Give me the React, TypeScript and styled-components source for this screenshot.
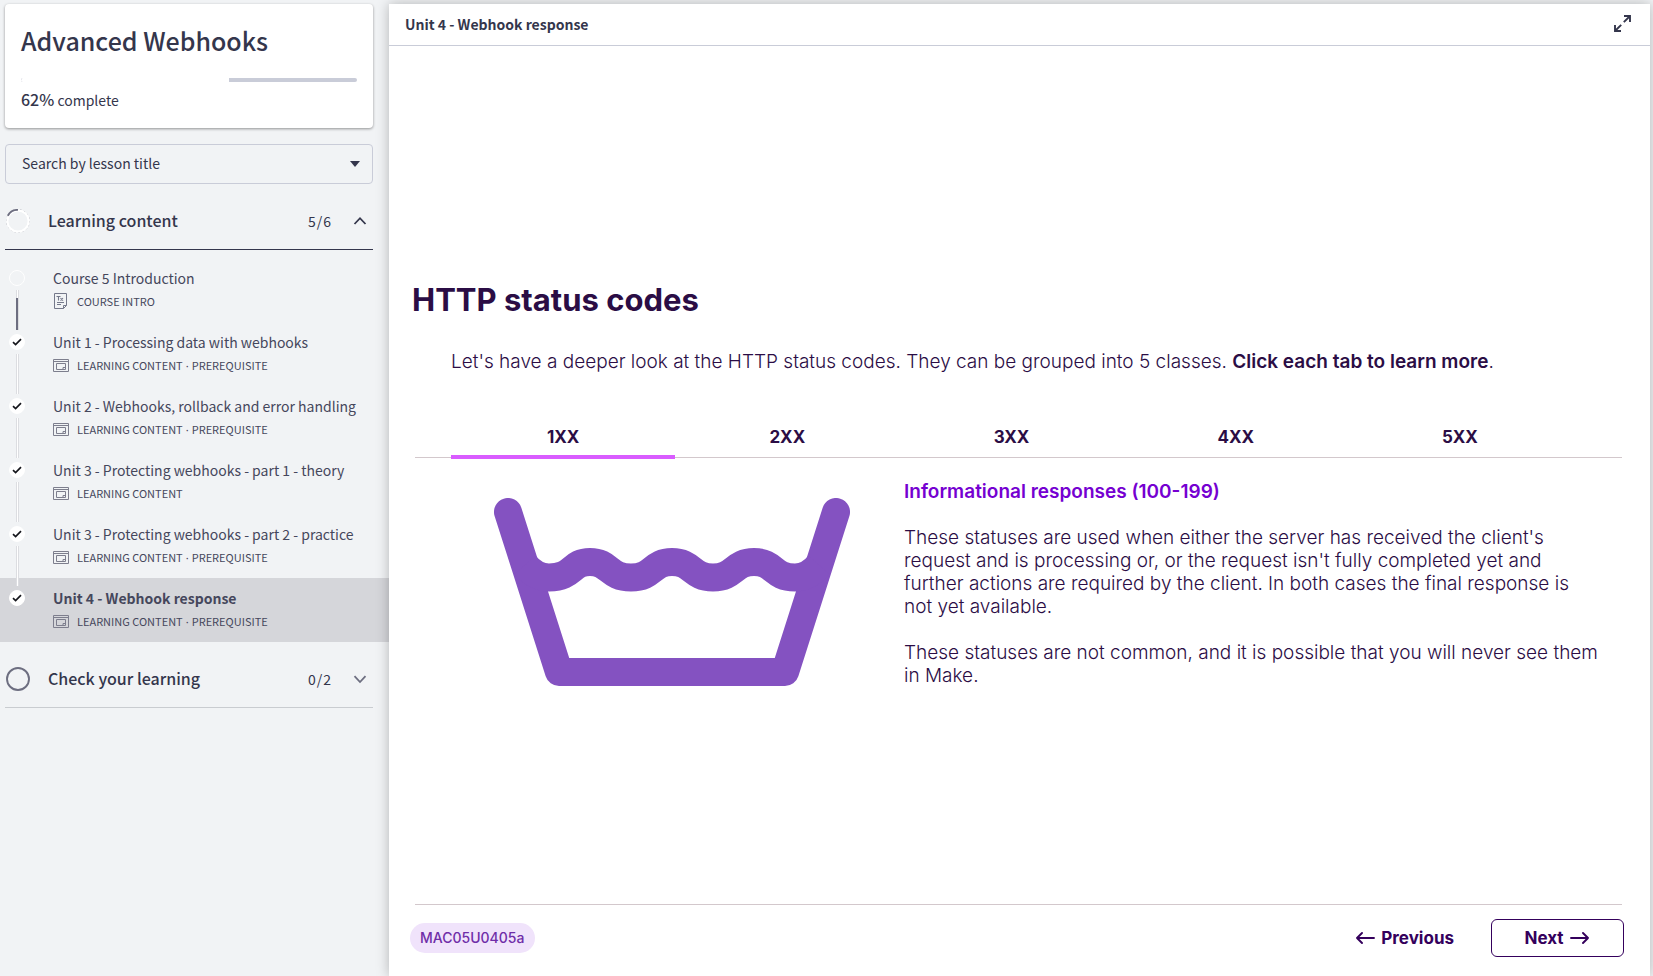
import React, { Fragment, useState } from "react";
import styled, { createGlobalStyle, css } from "styled-components";

const GlobalStyle = createGlobalStyle`
  *, *::before, *::after { box-sizing: border-box; }
  body {
    margin: 0;
    background: #f1f3f5;
    color: #34364c;
    font-family: "Noto Sans CJK SC", "Noto Sans", sans-serif;
  }
  h1, h2, h3, p, ol { margin: 0; padding: 0; }
  ol { list-style: none; }
  button, select { font: inherit; color: inherit; }
`;

const Page = styled.div`
  display: grid;
  grid-template-columns: 389px minmax(0, 1fr);
  min-height: 100vh;
`;

const Sidebar = styled.aside`
  padding-top: 4px;
`;

const CourseCard = styled.section`
  margin: 0 16px 0 5px;
  padding: 18px 16px 16px;
  height: 124px;
  background: #fff;
  border-radius: 4px;
  box-shadow: 0 1px 3px rgba(0, 0, 0, 0.4);
`;

const CourseTitle = styled.h1`
  font-size: 25px;
  line-height: 36px;
  font-weight: 500;
`;

const ProgressTrack = styled.div`
  display: flex;
  height: 4px;
  margin: 20px 0 6px;
  border-radius: 2px;
  overflow: hidden;
  background: #c9ccd8;
`;

const ProgressFill = styled.div`
  background: #fff;
  border-left: 1px dotted #e4e4ea;
`;

const ProgressText = styled.p`
  font-size: 14px;
  line-height: 22px;
`;

const Strong = styled.strong`
  font-size: 16px;
  font-weight: 500;
`;

const SearchBox = styled.div`
  display: grid;
  align-items: center;
  margin: 16px 16px 0 5px;
`;

const SearchSelect = styled.select`
  grid-area: 1 / 1;
  appearance: none;
  height: 40px;
  padding: 0 40px 2px 16px;
  border: 1px solid #c9ccd8;
  border-radius: 4px;
  background: transparent;
  font-size: 14px;
`;

const Caret = styled.svg`
  grid-area: 1 / 1;
  justify-self: end;
  margin-right: 13px;
  pointer-events: none;
`;

const GroupHeader = styled.button<{ $open?: boolean }>`
  display: flex;
  align-items: center;
  width: calc(100% - 21px);
  height: 58px;
  margin: 8px 16px 0 5px;
  padding: 0 6px 0 1px;
  border: 0;
  border-bottom: 1px solid ${(p) => (p.$open ? "#34364c" : "#c9ccd0")};
  background: none;
  text-align: left;
  cursor: pointer;
`;

const GroupTitle = styled.span`
  flex: 1;
  padding: 0 0 2px 18px;
  font-size: 16px;
  line-height: 24px;
  font-weight: 500;
`;

const GroupCount = styled.span`
  padding-right: 21px;
  font-size: 14px;
  line-height: 24px;
  letter-spacing: 1px;
`;

const LessonList = styled.ol`
  padding-top: 8px;
`;

const LessonRow = styled.li<{ $active?: boolean }>`
  display: flex;
  height: 64px;
  padding: 10px 0 0 9px;
  background: ${(p) => (p.$active ? "#d5d6da" : "transparent")};
`;

const Rail = styled.div`
  position: relative;
  z-index: 1;
  flex: 0 0 44px;
  padding-top: 2px;
`;

const StatusDot = styled.span<{ $done?: boolean }>`
  display: flex;
  align-items: center;
  justify-content: center;
  width: 16px;
  height: 16px;
  border: 1px solid #fff;
  border-radius: 50%;
  ${(p) => p.$done && css`background: #fff;`}
`;

const Connector = styled.span<{ $partial?: boolean }>`
  position: absolute;
  left: 7px;
  top: 22px;
  width: 3px;
  height: 40px;
  border: solid #dcdde1;
  border-width: 0 1px;
  background: #fff;
  ${(p) =>
    p.$partial &&
    css`
      &::after {
        content: "";
        position: absolute;
        inset: 8px 0 0 -1px;
        width: 2px;
        background: #6d6e80;
      }
    `}
`;

const LessonLink = styled.a`
  display: block;
  color: inherit;
  text-decoration: none;
  white-space: nowrap;
`;

const LessonTitle = styled.span<{ $active?: boolean }>`
  display: block;
  font-size: 14px;
  line-height: 20px;
  font-weight: ${(p) => (p.$active ? 700 : 400)};
  color: #45475c;
`;

const LessonMeta = styled.span`
  display: flex;
  align-items: center;
  height: 26px;
  font-size: 11px;
  color: #45475c;

  svg {
    margin-right: 8px;
  }
`;

const Separator = styled.span`
  width: 9px;
  font-family: "Noto Sans", sans-serif;
  text-align: center;
`;

const Main = styled.main`
  display: flex;
  flex-direction: column;
  margin: 4px 3px 0 0;
  background: #fff;
  box-shadow: 0 0 12px rgba(0, 0, 0, 0.26);
`;

const TopBar = styled.header`
  display: flex;
  align-items: center;
  justify-content: space-between;
  height: 42px;
  padding: 0 19px 2px 16px;
  border-bottom: 1px solid #c9ccd8;
`;

const TopTitle = styled.h2`
  font-size: 14px;
  line-height: 24px;
  font-weight: 700;
`;

const IconButton = styled.button`
  display: flex;
  padding: 0;
  border: 0;
  background: none;
  cursor: pointer;
`;

const Slide = styled.article`
  flex: 1;
  display: flex;
  flex-direction: column;
  padding: 234px 28px 19px 26px;
  font-family: Inter, "Open Sans", sans-serif;
  color: #2b0d45;
`;

const SlideTitle = styled.h2`
  margin-left: -3px;
  font-size: 31px;
  line-height: 40px;
  font-weight: 700;
`;

const Intro = styled.p`
  padding-left: 36px;
  margin-top: 29px;
  font-size: 19px;
  line-height: 26px;
  font-weight: 300;
`;

const IntroStrong = styled.strong`
  font-weight: 600;
`;

const TabBar = styled.div`
  display: grid;
  grid-template-columns: repeat(5, minmax(0, 1fr));
  margin-top: 43px;
  padding: 0 50px 0 36px;
  border-bottom: 1px solid #d3c8cc;
`;

const Tab = styled.button<{ $active?: boolean }>`
  height: 41px;
  margin-bottom: -2px;
  padding: 0;
  border: 0;
  border-bottom: 4px solid ${(p) => (p.$active ? "#d95cff" : "transparent")};
  background: none;
  font-size: 17px;
  font-weight: 700;
  cursor: pointer;
`;

const TabPanel = styled.div`
  display: grid;
  grid-template-columns: 489px minmax(0, 1fr);
  padding: 22px 20px 0 0;
`;

const Figure = styled.div`
  padding: 18px 0 0 79px;
`;

const PanelText = styled.div`
  display: grid;
  gap: 23px;
  align-content: start;
  font-size: 19px;
  line-height: 23px;
  font-weight: 300;
`;

const PanelTitle = styled.h3`
  font-size: 19px;
  font-weight: 600;
  color: #7500d1;
`;

const SlideFooter = styled.footer`
  display: flex;
  align-items: center;
  margin-top: auto;
  padding-top: 14px;
  border-top: 1px solid #d3c8cc;
`;

const CodePill = styled.span`
  margin-left: -5px;
  padding: 0 11px 0 10px;
  border-radius: 15px;
  background: #f0e3fb;
  color: #6f2da8;
  font-size: 14px;
  line-height: 30px;
  font-weight: 500;
`;

const NavButton = styled.button<{ $outlined?: boolean }>`
  display: flex;
  align-items: center;
  justify-content: center;
  gap: 6px;
  height: 38px;
  border: 1px solid ${(p) => (p.$outlined ? "#34005c" : "transparent")};
  border-radius: 6px;
  background: none;
  color: #34005c;
  font-size: 17px;
  font-weight: 700;
  cursor: pointer;
  ${(p) =>
    p.$outlined
      ? css`
          width: 133px;
          margin: 0 -2px 0 36px;
          padding: 0 8px 0 6px;
        `
      : css`
          margin-left: auto;
          padding: 0;
        `}
`;

const Check = () => (
  <svg width="10" height="8" viewBox="0 0 10 8" fill="none" stroke="#15161c" strokeWidth="1.7" aria-hidden="true">
    <path d="M1 4.2 3.6 6.6 9 1.2" />
  </svg>
);

const Chevron = ({ up }: { up?: boolean }) => (
  <svg width="14" height="14" viewBox="0 0 14 14" fill="none" stroke={up ? "#34364c" : "#6d6e80"} strokeWidth="1.8" aria-hidden="true">
    <path d={up ? "M1.5 10 7 4.2 12.5 10" : "M1.5 4.2 7 10 12.5 4.2"} />
  </svg>
);

const Ring = ({ progress }: { progress?: boolean }) => (
  <svg width="24" height="24" viewBox="0 0 24 24" fill="none" aria-hidden="true">
    {progress ? (
      <>
        <circle cx="12" cy="12" r="11.5" stroke="#b4b5be" strokeWidth="1" strokeDasharray="1.5 2.5" />
        <circle cx="12" cy="12" r="10.6" stroke="#fff" strokeWidth="2" />
        <path d="M1.8 6.8A11.2 11.2 0 0 1 12 .9" stroke="#6d6e80" strokeWidth="1.9" />
      </>
    ) : (
      <circle cx="12" cy="12" r="11" stroke="#6d6e80" strokeWidth="1.9" />
    )}
  </svg>
);

const WindowIcon = () => (
  <svg width="16" height="13" viewBox="0 0 16 13" fill="none" stroke="#7d7e8d" aria-hidden="true">
    <path d="M.5.5h15v12H.5zM.5 2.5h15M3.5 4.5h9v6h-9z" />
    <path d="M12 8.5h-2v2" />
  </svg>
);

const TextPageIcon = () => (
  <svg width="16" height="16" viewBox="0 0 16 16" fill="none" stroke="#74788a" aria-hidden="true">
    <path d="M1.5.5h12v12l-3 3h-9zM13.5 12.5h-3v3" />
    <path d="M3.5 3.5h4M5.5 3.5v4M7.5 5.2l2.500 2.500M10 5.200 7.500 7.700M4 9.500h7M4 11.500h4" strokeWidth="1.100" />
  </svg>
);

const ExpandIcon = () => (
  <svg width="17" height="17" viewBox="0 0 17 17" fill="none" stroke="#34364c" strokeWidth="1.9" aria-hidden="true">
    <path d="M10 1h6v6M16 1 9.8 7.2M7 16H1v-6M1 16l6.2-6.2" />
  </svg>
);

const ArrowIcon = ({ left }: { left?: boolean }) => (
  <svg width="19" height="14" viewBox="0 0 19 14" fill="none" stroke="#34005c" strokeWidth="1.9" strokeLinecap="round" strokeLinejoin="round" aria-hidden="true">
    <path d={left ? "M18 7H1M6 2 1 7l5 5" : "M1 7h17M13 2l5 5-5 5"} />
  </svg>
);

const WashTub = () => (
  <svg width="356" height="188" viewBox="0 0 356 188" fill="none" stroke="#8452c1" strokeWidth="28" role="img" aria-label="Wash tub">
    <path d="M14 14 65 174H291L342 14" strokeLinecap="round" strokeLinejoin="round" />
    <path d="M31 67C38 75 45 79.5 55 79.5C80 79.5 76 64 96 64S114 79.5 137 79.5S157 64 178 64S197 79.5 219 79.5S239 64 260 64S278 79.5 301 79.5C311 79.5 318 75 325 67" />
  </svg>
);

type Lesson = { title: string; meta: string[]; intro?: boolean };

const lessons: Lesson[] = [
  { title: "Course 5 Introduction", meta: ["COURSE INTRO"], intro: true },
  { title: "Unit 1 - Processing data with webhooks", meta: ["LEARNING CONTENT", "PREREQUISITE"] },
  { title: "Unit 2 - Webhooks, rollback and error handling", meta: ["LEARNING CONTENT", "PREREQUISITE"] },
  { title: "Unit 3 - Protecting webhooks - part 1 - theory", meta: ["LEARNING CONTENT"] },
  { title: "Unit 3 - Protecting webhooks - part 2 - practice", meta: ["LEARNING CONTENT", "PREREQUISITE"] },
  { title: "Unit 4 - Webhook response", meta: ["LEARNING CONTENT", "PREREQUISITE"] },
];

const tabs = ["1XX", "2XX", "3XX", "4XX", "5XX"];

export default function App() {
  const [tab, setTab] = useState(0);
  const current = lessons.length - 1;
  const percent = 62;

  return (
    <>
      <GlobalStyle />
      <Page>
        <Sidebar>
          <CourseCard>
            <CourseTitle>Advanced Webhooks</CourseTitle>
            <ProgressTrack role="progressbar" aria-label="Course progress" aria-valuenow={percent}>
              <ProgressFill style={{ width: `${percent}%` }} />
            </ProgressTrack>
            <ProgressText>
              <Strong>{percent}%</Strong> complete
            </ProgressText>
          </CourseCard>

          <SearchBox>
            <SearchSelect aria-label="Search by lesson title" defaultValue="">
              <option value="">Search by lesson title</option>
              {lessons.map((l) => (
                <option key={l.title}>{l.title}</option>
              ))}
            </SearchSelect>
            <Caret width="10" height="6" viewBox="0 0 10 6" aria-hidden="true">
              <path d="M0 0h10L5 6z" fill="#34364c" />
            </Caret>
          </SearchBox>

          <GroupHeader $open aria-expanded="true">
            <Ring progress />
            <GroupTitle>Learning content</GroupTitle>
            <GroupCount>5/6</GroupCount>
            <Chevron up />
          </GroupHeader>

          <LessonList>
            {lessons.map((lesson, i) => (
              <LessonRow key={lesson.title} $active={i === current}>
                <Rail>
                  <StatusDot $done={i > 0}>{i > 0 && <Check />}</StatusDot>
                  {i < current && <Connector $partial={i === 0} />}
                </Rail>
                <LessonLink href="#" aria-current={i === current ? "page" : undefined}>
                  <LessonTitle $active={i === current}>{lesson.title}</LessonTitle>
                  <LessonMeta>
                    {lesson.intro ? <TextPageIcon /> : <WindowIcon />}
                    {lesson.meta.map((label, n) => (
                      <Fragment key={label}>
                        {n > 0 && <Separator>·</Separator>}
                        <span>{label}</span>
                      </Fragment>
                    ))}
                  </LessonMeta>
                </LessonLink>
              </LessonRow>
            ))}
          </LessonList>

          <GroupHeader aria-expanded="false">
            <Ring />
            <GroupTitle>Check your learning</GroupTitle>
            <GroupCount>0/2</GroupCount>
            <Chevron />
          </GroupHeader>
        </Sidebar>

        <Main>
          <TopBar>
            <TopTitle>Unit 4 - Webhook response</TopTitle>
            <IconButton aria-label="Full screen">
              <ExpandIcon />
            </IconButton>
          </TopBar>
          <Slide>
            <SlideTitle>HTTP status codes</SlideTitle>
            <Intro>
              Let's have a deeper look at the HTTP status codes. They can be grouped into 5 classes.{" "}
              <IntroStrong>Click each tab to learn more</IntroStrong>.
            </Intro>
            <TabBar role="tablist">
              {tabs.map((name, i) => (
                <Tab key={name} role="tab" aria-selected={i === tab} $active={i === tab} onClick={() => setTab(i)}>
                  {name}
                </Tab>
              ))}
            </TabBar>
            <TabPanel role="tabpanel">
              <Figure>
                <WashTub />
              </Figure>
              <PanelText>
                <PanelTitle>Informational responses (100-199)</PanelTitle>
                <p>
                  These statuses are used when either the server has received the client's request and is processing
                  or, or the request isn't fully completed yet and further actions are required by the client. In both
                  cases the final response is not yet available.
                </p>
                <p>These statuses are not common, and it is possible that you will never see them in Make.</p>
              </PanelText>
            </TabPanel>
            <SlideFooter>
              <CodePill>MAC05U0405a</CodePill>
              <NavButton>
                <ArrowIcon left />
                Previous
              </NavButton>
              <NavButton $outlined>
                Next
                <ArrowIcon />
              </NavButton>
            </SlideFooter>
          </Slide>
        </Main>
      </Page>
    </>
  );
}
